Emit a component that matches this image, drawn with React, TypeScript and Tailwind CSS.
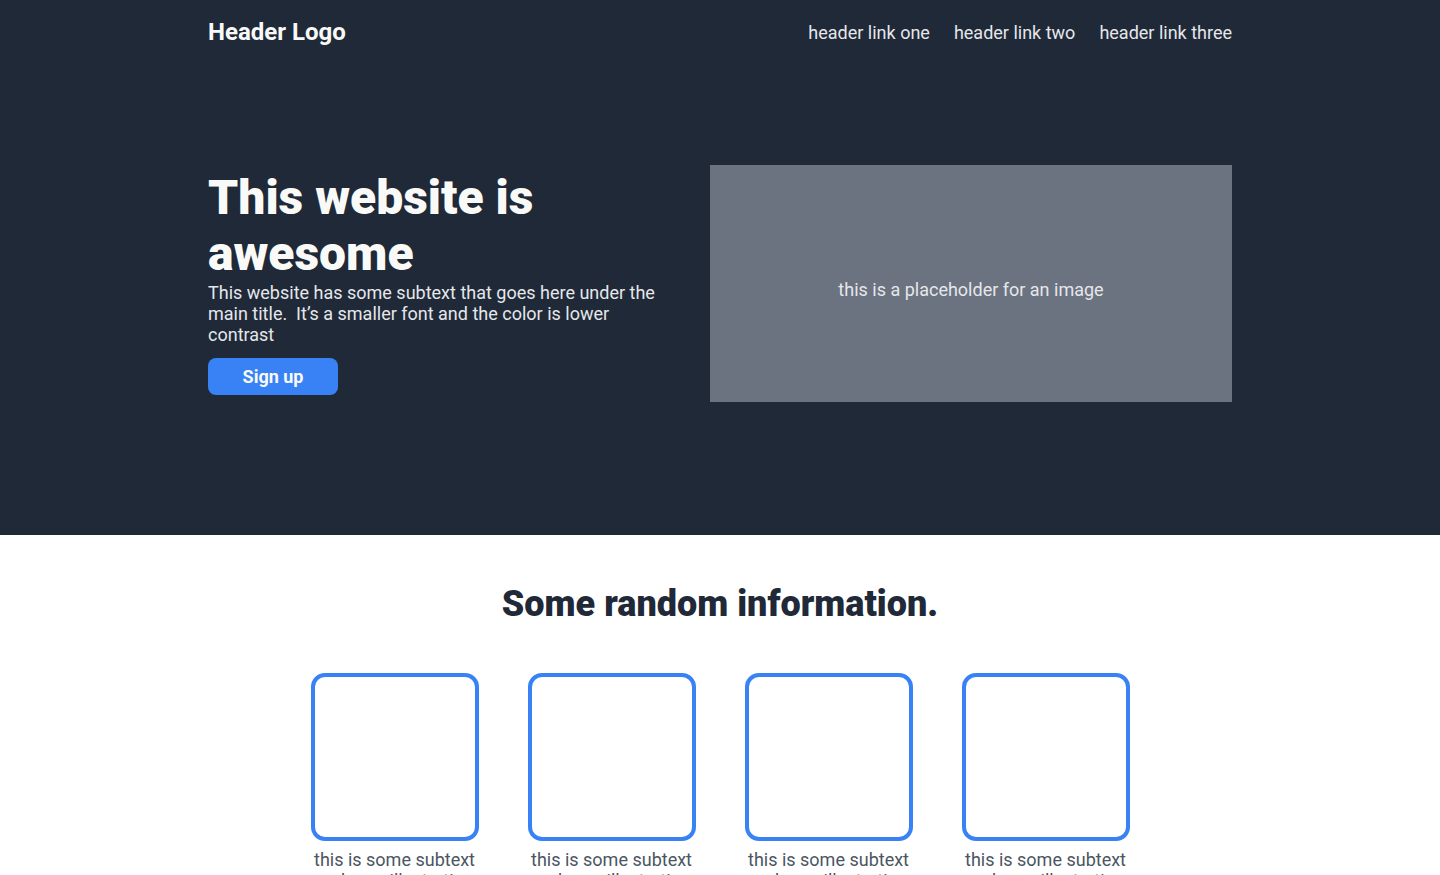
import React from "react";

const cards = [
    "this is some subtext under an illustration or image",
    "this is some subtext under an illustration or image",
    "this is some subtext under an illustration or image",
    "this is some subtext under an illustration or image",
];

const App = () => {
    return (
        <div className="min-h-screen bg-white font-['Roboto',sans-serif]">
            {/* Hero */}
            <div className="bg-[#1f2937]">
                <div className="mx-auto w-[1024px]">
                    <header className="flex h-16 items-center justify-between">
                        <div className="text-[24px] font-bold text-[#f9faf8]">Header Logo</div>
                        <nav className="flex gap-[24px] text-[18px] text-[#e5e7eb]">
                            <a href="#">header link one</a>
                            <a href="#">header link two</a>
                            <a href="#">header link three</a>
                        </nav>
                    </header>
                    <div className="flex items-start justify-between pt-[101px] pb-[133px]">
                        <div className="mt-[5px] w-[470px]">
                            <h1 className="text-[48px] font-black leading-[56px] text-[#f9faf8]">
                                This website is awesome
                            </h1>
                            <p className="text-[18px] leading-[21px] text-[#e5e7eb]">
                                This website has some subtext that goes here under the main title.&nbsp; It’s a smaller
                                font and the color is lower contrast
                            </p>
                            <button className="mt-[13px] w-[130px] rounded-lg bg-[#3882f6] py-2 text-[18px] leading-[21px] font-bold text-[#f9faf8]">
                                Sign up
                            </button>
                        </div>
                        <div className="flex h-[237px] w-[522px] items-center justify-center bg-[#6b7280] pt-3 text-[18px] text-[#e5e7eb]">
                            this is a placeholder for an image
                        </div>
                    </div>
                </div>
            </div>

            {/* Info */}
            <div className="pt-12 pb-16">
                <h2 className="text-center text-[36px] font-black leading-[42px] text-[#1f2937]">
                    Some random information.
                </h2>
                <div className="mt-[48px] flex justify-center gap-[49px]">
                    {cards.map((text, i) => (
                        <div key={i} className="flex w-[168px] flex-col items-center gap-2">
                            <div className="h-[168px] w-[168px] rounded-[14px] border-4 border-[#3882f6]" />
                            <p className="text-center text-[18px] leading-[21px] text-[#4b5563]">{text}</p>
                        </div>
                    ))}
                </div>
            </div>
        </div>
    );
};

export default App;
